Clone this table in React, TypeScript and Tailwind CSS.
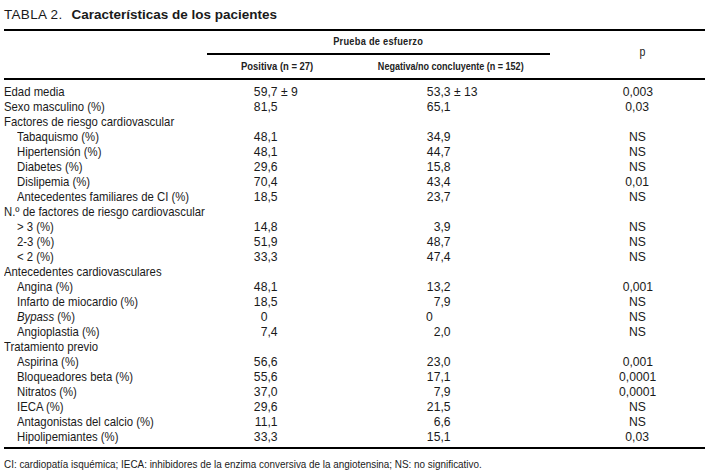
import React from "react";

type Row = {
  label: React.ReactNode;
  sub?: boolean;
  pos?: string;
  neg?: string;
  p?: string;
  negLeft?: boolean;
};

const rows: Row[] = [
  { label: "Edad media", pos: "59,7 ± 9", neg: "53,3 ± 13", p: "0,003" },
  { label: "Sexo masculino (%)", pos: "81,5", neg: "65,1", p: "0,03" },
  { label: "Factores de riesgo cardiovascular" },
  { label: "Tabaquismo (%)", sub: true, pos: "48,1", neg: "34,9", p: "NS" },
  { label: "Hipertensión (%)", sub: true, pos: "48,1", neg: "44,7", p: "NS" },
  { label: "Diabetes (%)", sub: true, pos: "29,6", neg: "15,8", p: "NS" },
  { label: "Dislipemia (%)", sub: true, pos: "70,4", neg: "43,4", p: "0,01" },
  { label: "Antecedentes familiares de CI (%)", sub: true, pos: "18,5", neg: "23,7", p: "NS" },
  { label: "N.º de factores de riesgo cardiovascular" },
  { label: "> 3 (%)", sub: true, pos: "14,8", neg: "3,9", p: "NS" },
  { label: "2-3 (%)", sub: true, pos: "51,9", neg: "48,7", p: "NS" },
  { label: "< 2 (%)", sub: true, pos: "33,3", neg: "47,4", p: "NS" },
  { label: "Antecedentes cardiovasculares" },
  { label: "Angina (%)", sub: true, pos: "48,1", neg: "13,2", p: "0,001" },
  { label: "Infarto de miocardio (%)", sub: true, pos: "18,5", neg: "7,9", p: "NS" },
  {
    label: (
      <>
        <i>Bypass</i> (%)
      </>
    ),
    sub: true,
    pos: "0",
    neg: "0",
    negLeft: true,
    p: "NS",
  },
  { label: "Angioplastia (%)", sub: true, pos: "7,4", neg: "2,0", p: "NS" },
  { label: "Tratamiento previo" },
  { label: "Aspirina (%)", sub: true, pos: "56,6", neg: "23,0", p: "0,001" },
  { label: "Bloqueadores beta (%)", sub: true, pos: "55,6", neg: "17,1", p: "0,0001" },
  { label: "Nitratos (%)", sub: true, pos: "37,0", neg: "7,9", p: "0,0001" },
  { label: "IECA (%)", sub: true, pos: "29,6", neg: "21,5", p: "NS" },
  { label: "Antagonistas del calcio (%)", sub: true, pos: "11,1", neg: "6,6", p: "NS" },
  { label: "Hipolipemiantes (%)", sub: true, pos: "33,3", neg: "15,1", p: "0,03" },
];

// decimal-aligned figure: integer part right-aligned in a fixed box, rest follows
function Figure({ value, left }: { value?: string; left?: boolean }) {
  if (!value) return null;
  const i = value.indexOf(",");
  const whole = i === -1 ? value : value.slice(0, i);
  const rest = i === -1 ? "" : value.slice(i);
  return (
    <span className="flex origin-left scale-x-[0.9]">
      <span className={left ? "w-[16px] text-left" : "w-[16px] text-right"}>{whole}</span>
      <span className="whitespace-pre">{rest}</span>
    </span>
  );
}

export default function App() {
  return (
    <div className="min-h-[475px] w-[705px] bg-white pl-[4px] font-['Liberation_Sans',Arial,sans-serif] text-[13.5px] text-[#1a1a1a]">
      <div className="flex h-[29px] items-center gap-[9px] pt-[1px] text-[13.5px]">
        <span className="tracking-[0.3px]">TABLA 2.</span>
        <span className="font-bold">Características de los pacientes</span>
      </div>
      <div className="h-[2px] bg-black" />

      <div className="grid grid-cols-[203px_140px_203px_1fr] text-[10.5px] font-bold leading-none text-[#222]">
        <div className="col-start-2 col-span-2 flex h-[24px] items-center justify-center border-b-2 border-black pb-[1px]">
          <span className="inline-block scale-x-[0.88] tracking-[0.3px]">Prueba de esfuerzo</span>
        </div>
        <div className="col-start-4 row-span-2 row-start-1 flex items-center justify-center pl-[30px] pb-[6px] text-[12px] font-normal">
          <span className="inline-block scale-x-[0.88]">p</span>
        </div>
        <div className="col-start-2 row-start-2 flex h-[23px] items-center justify-center">
          <span className="inline-block scale-x-[0.9]">Positiva (n = 27)</span>
        </div>
        <div className="col-start-3 row-start-2 flex h-[23px] items-center justify-center pl-[5px]">
          <span className="inline-block scale-x-[0.86] whitespace-nowrap">Negativa/no concluyente (n = 152)</span>
        </div>
      </div>
      <div className="h-[2px] bg-black" />

      <div className="pt-[4px] pb-[3px]">
        {rows.map((r, idx) => (
          <div key={idx} className="grid h-[15px] grid-cols-[203px_140px_203px_1fr] items-center leading-[15px]">
            <div className={r.sub ? "pl-[13px] whitespace-nowrap" : "whitespace-nowrap"}>
              <span className="inline-block origin-left scale-x-[0.84]">{r.label}</span>
            </div>
            <div className="pl-[46px]">
              <Figure value={r.pos} />
            </div>
            <div className="pl-[79px]">
              <Figure value={r.neg} left={r.negLeft} />
            </div>
            <div className="pl-[20px] text-center">
              <span className="inline-block scale-x-[0.9]">{r.p}</span>
            </div>
          </div>
        ))}
      </div>
      <div className="h-[2px] bg-black" />

      <div className="pt-[9px] text-[11.5px] leading-[13px] whitespace-nowrap">
        <span className="inline-block origin-left scale-x-[0.86]">
          CI: cardiopatía isquémica; IECA: inhibidores de la enzima conversiva de la angiotensina; NS: no significativo.
        </span>
      </div>
    </div>
  );
}
